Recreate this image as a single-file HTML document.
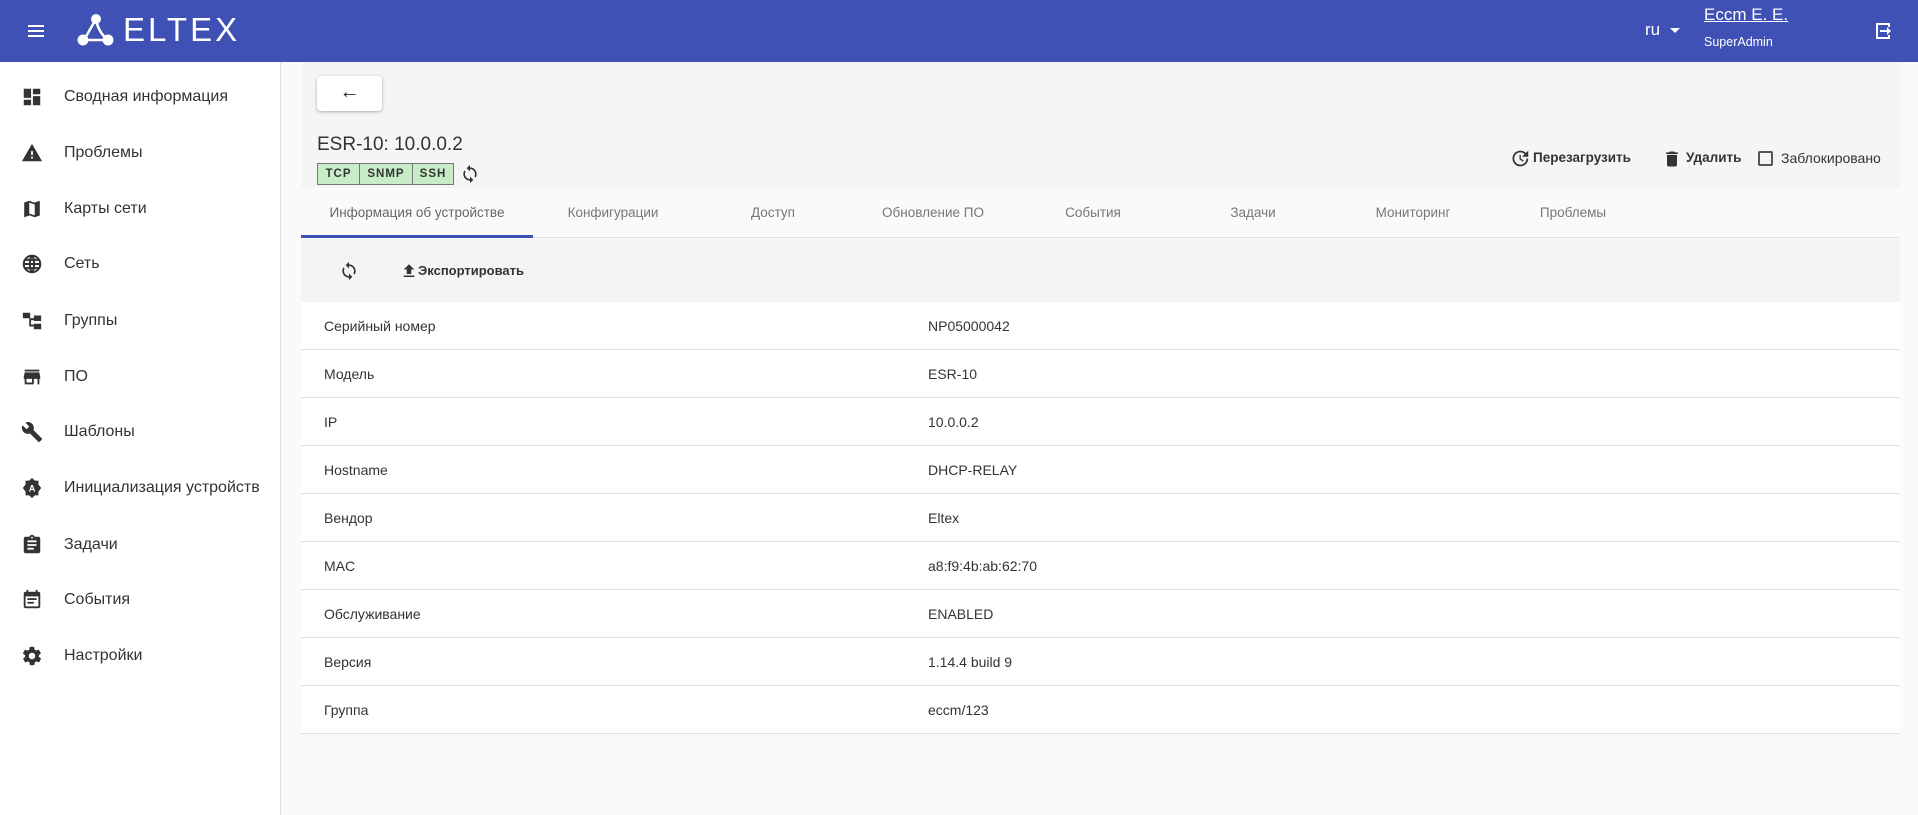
<!DOCTYPE html>
<html><head><meta charset="utf-8"><style>
*{box-sizing:border-box;margin:0;padding:0}
body{width:1918px;height:815px;overflow:hidden;background:#fafafa;font-family:"Liberation Sans",sans-serif;color:#333;position:relative}
.hdr{position:absolute;left:0;top:0;width:1918px;height:62px;background:#3f51b5;color:#fff}
.side{position:absolute;left:0;top:62px;width:281px;height:753px;background:#fff;border-right:1px solid #e0e0e0}
.it{position:absolute;left:0;height:40px;width:280px}
.it svg{position:absolute;left:21px;top:8px}
.it span{position:absolute;left:64px;top:10px;font-size:16px;color:#333}
.abs{position:absolute}
.tab{position:absolute;top:188px;height:50px;line-height:50px;text-align:center;font-size:13.5px;color:#777}
.row{position:absolute;left:301px;width:1599px;height:48px;background:#fff;border-bottom:1px solid #e0e0e0;font-size:14px}
.row .l{position:absolute;left:23px;top:16px}
.row .v{position:absolute;left:627px;top:16px}
</style></head><body>
<div class="hdr">
 <svg class="abs" style="left:26px;top:21px" width="20" height="20" viewBox="0 0 20 20"><rect x="2" y="4" width="16" height="2" fill="#fff"/><rect x="2" y="9" width="16" height="2" fill="#fff"/><rect x="2" y="14" width="16" height="2" fill="#fff"/></svg>
 <svg class="abs" style="left:76px;top:12px" width="40" height="36" viewBox="0 0 40 36"><path d="M20 7 Q22 20 32 28 M8 28 L32 28 M20 7 L8 28" stroke="#fff" stroke-width="2.5" fill="none"/><circle cx="20" cy="7" r="5" fill="#fff"/><circle cx="7" cy="28" r="5.5" fill="#fff"/><circle cx="32" cy="28" r="5.5" fill="#fff"/></svg>
 <div class="abs" style="left:123px;top:12px;font-size:33px;letter-spacing:3px;line-height:36px">ELTEX</div>
 <div class="abs" style="left:1645px;top:20px;font-size:17px">ru</div>
 <div class="abs" style="left:1670px;top:28px;border-left:5px solid transparent;border-right:5px solid transparent;border-top:5px solid #fff"></div>
 <div class="abs" style="left:1704px;top:5px;font-size:17px;text-decoration:underline">Eccm E. E.</div>
 <div class="abs" style="left:1704px;top:35px;font-size:12.5px">SuperAdmin</div>
 <svg class="abs" style="left:1874px;top:21px" width="20" height="20" viewBox="0 0 20 20"><path d="M2 2h14v4h-2V4H4v12h10v-2h2v4H2z" fill="#fff"/><path d="M6 9h7V6l4 4-4 4v-3H6z" fill="#fff"/></svg>
</div>
<div class="side">
 <div class="it" style="top:16px"><svg width="22" height="22" viewBox="0 0 24 24" fill="#333"><path d="M3 13h8V3H3zm0 8h8v-6H3zm10 0h8V11h-8zm0-18v6h8V3z"/></svg><span>Сводная информация</span></div>
 <div class="it" style="top:72px"><svg width="22" height="22" viewBox="0 0 24 24" fill="#333"><path d="M1 21h22L12 2zm12-3h-2v-2h2zm0-4h-2v-4h2z"/></svg><span>Проблемы</span></div>
 <div class="it" style="top:128px"><svg width="22" height="22" viewBox="0 0 24 24" fill="#333"><path d="M20.5 3l-6 2.1L9 3 3.5 4.9V21l6-2.1L15 21l5.5-1.9zM15 19l-6-2.1V5l6 2.1z"/></svg><span>Карты сети</span></div>
 <div class="it" style="top:183px"><svg width="22" height="22" viewBox="0 0 24 24" fill="none" stroke="#333" stroke-width="2.2"><circle cx="12" cy="12" r="9"/><path d="M3 12h18M12 3c3 3 3 15 0 18M12 3c-3 3-3 15 0 18M4.5 7.5h15M4.5 16.5h15"/></svg><span>Сеть</span></div>
 <div class="it" style="top:240px"><svg width="22" height="22" viewBox="0 0 24 24" fill="#333"><path d="M2 3h8v6H2zM14 6h8v6h-8zM14 15h8v6h-8zM7 9h2v9h5v-2h-3V11h3V9H7z"/></svg><span>Группы</span></div>
 <div class="it" style="top:296px"><svg width="22" height="22" viewBox="0 0 24 24" fill="#333"><path d="M4 4h16v2H4zm16 3H4l-1 5v2h1v6h10v-6h4v6h2v-6h1v-2zm-8 11H6v-4h6z"/></svg><span>ПО</span></div>
 <div class="it" style="top:351px"><svg width="22" height="22" viewBox="0 0 24 24" fill="#333"><path d="M22.7 19l-9.1-9.1c.9-2.3.4-5-1.5-6.9-2-2-5-2.4-7.4-1.3L9 6 6 9 1.6 4.7C.4 7.1.9 10.1 2.9 12.1c1.9 1.9 4.6 2.4 6.9 1.5l9.1 9.1c.4.4 1 .4 1.4 0l2.3-2.3c.5-.4.5-1.1.1-1.4z"/></svg><span>Шаблоны</span></div>
 <div class="it" style="top:407px"><svg width="22" height="22" viewBox="0 0 24 24"><path fill="#333" d="M12 1l3 3h4v4l3 4-3 4v4h-4l-3 3-3-3H5v-4l-3-4 3-4V4h4z"/><text x="12" y="16" font-size="10" font-weight="bold" fill="#fff" text-anchor="middle" font-family="Liberation Sans">A</text></svg><span>Инициализация устройств</span></div>
 <div class="it" style="top:464px"><svg width="22" height="22" viewBox="0 0 24 24" fill="#333"><path d="M19 3h-4.2C14.4 1.8 13.3 1 12 1s-2.4.8-2.8 2H5c-1.1 0-2 .9-2 2v14c0 1.1.9 2 2 2h14c1.1 0 2-.9 2-2V5c0-1.1-.9-2-2-2zm-7 0c.6 0 1 .4 1 1s-.4 1-1 1-1-.4-1-1 .4-1 1-1zm2 14H7v-2h7zm3-4H7v-2h10zm0-4H7V7h10z"/></svg><span>Задачи</span></div>
 <div class="it" style="top:519px"><svg width="22" height="22" viewBox="0 0 24 24" fill="#333"><path d="M16 1v2H8V1H6v2H5c-1.1 0-2 .9-2 2v14c0 1.1.9 2 2 2h14c1.1 0 2-.9 2-2V5c0-1.1-.9-2-2-2h-1V1zm3 18H5V8h14z"/><rect x="7" y="10" width="10" height="2" fill="#333"/><rect x="7" y="14" width="7" height="2" fill="#333"/></svg><span>События</span></div>
 <div class="it" style="top:575px"><svg width="22" height="22" viewBox="0 0 24 24" fill="#333"><path d="M19.4 13c0-.3.1-.6.1-1s0-.7-.1-1l2.1-1.6c.2-.2.2-.4.1-.6l-2-3.5c-.1-.2-.4-.3-.6-.2l-2.5 1c-.5-.4-1.1-.7-1.7-1l-.4-2.6c0-.2-.2-.4-.5-.4h-4c-.2 0-.4.2-.5.4l-.4 2.7c-.6.2-1.1.6-1.700 1l-2.5-1c-.2-.1-.5 0-.6.2l-2 3.5c-.1.2-.1.5.1.6L4.6 11c0 .3-.1.6-.1 1s0 .7.1 1l-2.1 1.6c-.2.2-.2.4-.1.6l2 3.5c.1.2.4.3.6.2l2.5-1c.5.4 1.1.7 1.7 1l.4 2.6c0 .2.2.4.5.4h4c.2 0 .4-.2.5-.4l.4-2.6c.6-.3 1.2-.6 1.7-1l2.5 1c.2.1.5 0 .6-.2l2-3.5c.1-.2.1-.5-.1-.6zM12 15.5c-1.9 0-3.5-1.6-3.5-3.5s1.6-3.5 3.5-3.5 3.5 1.6 3.5 3.5-1.6 3.5-3.5 3.5z"/></svg><span>Настройки</span></div>
</div>
<div class="abs" style="left:301px;top:62px;width:1599px;height:126px;background:#f5f5f5"></div>
<div class="abs" style="left:317px;top:76px;width:65px;height:35px;background:#fff;border-radius:4px;box-shadow:0 1px 3px rgba(0,0,0,.3);text-align:center;line-height:33px;font-size:20px;color:#222">←</div>
<div class="abs" style="left:317px;top:134px;font-size:19px;color:#333">ESR-10: 10.0.0.2</div>
<div class="abs" style="left:317px;top:163px;height:22px;display:flex;border:1px solid #777;background:#c8ecc8;font-size:11.5px;font-weight:bold;letter-spacing:1px;color:#333;line-height:20px">
 <div style="width:42px;text-align:center;border-right:1px solid #777">TCP</div><div style="width:53px;text-align:center;border-right:1px solid #777">SNMP</div><div style="width:40px;text-align:center">SSH</div></div>
<svg class="abs" style="left:460px;top:164px" width="20" height="20" viewBox="0 0 24 24" fill="#333"><path d="M12 4V1L8 5l4 4V6c3.3 0 6 2.7 6 6 0 1-.3 2-.7 2.8l1.5 1.5C19.5 15 20 13.6 20 12c0-4.4-3.6-8-8-8zm0 14c-3.3 0-6-2.7-6-6 0-1 .3-2 .7-2.8L5.2 7.7C4.5 9 4 10.4 4 12c0 4.4 3.6 8 8 8v3l4-4-4-4z"/></svg>
<svg class="abs" style="left:1509px;top:148px" width="21" height="21" viewBox="0 0 24 24" fill="#333"><path d="M13 3a9 9 0 1 0 9 9h-2a7 7 0 1 1-2.1-5l-2.9 3h7V3l-2.6 2.6A9 9 0 0 0 13 3zm-1 5v5l4 2.5.8-1.3-3.3-2V8z"/></svg>
<div class="abs" style="left:1533px;top:150px;font-size:13.5px;font-weight:bold;color:#333">Перезагрузить</div>
<svg class="abs" style="left:1662px;top:148px" width="20" height="22" viewBox="0 0 24 24" fill="#333"><path d="M6 19c0 1.1.9 2 2 2h8c1.1 0 2-.9 2-2V7H6zM19 4h-3.5l-1-1h-5l-1 1H5v2h14z"/></svg>
<div class="abs" style="left:1686px;top:150px;font-size:13.5px;font-weight:bold;color:#333">Удалить</div>
<div class="abs" style="left:1758px;top:151px;width:15px;height:15px;border:2px solid #555;border-radius:2px"></div>
<div class="abs" style="left:1781px;top:150px;font-size:14px;color:#333">Заблокировано</div>
<div class="abs" style="left:301px;top:188px;width:1599px;height:50px;background:#fafafa;border-bottom:1px solid #e0e0e0"></div>
<div class="tab" style="left:301px;width:232px;color:#666">Информация об устройстве</div>
<div class="abs" style="left:301px;top:235px;width:232px;height:3px;background:#3f51b5"></div>
<div class="tab" style="left:533px;width:160px">Конфигурации</div>
<div class="tab" style="left:693px;width:160px">Доступ</div>
<div class="tab" style="left:853px;width:160px">Обновление ПО</div>
<div class="tab" style="left:1013px;width:160px">События</div>
<div class="tab" style="left:1173px;width:160px">Задачи</div>
<div class="tab" style="left:1333px;width:160px">Мониторинг</div>
<div class="tab" style="left:1493px;width:160px">Проблемы</div>
<div class="abs" style="left:301px;top:239px;width:1599px;height:63px;background:#f4f4f4"></div>
<svg class="abs" style="left:339px;top:261px" width="20" height="20" viewBox="0 0 24 24" fill="#333"><path d="M12 4V1L8 5l4 4V6c3.3 0 6 2.7 6 6 0 1-.3 2-.7 2.8l1.5 1.5C19.5 15 20 13.6 20 12c0-4.4-3.6-8-8-8zm0 14c-3.3 0-6-2.7-6-6 0-1 .3-2 .7-2.8L5.2 7.7C4.5 9 4 10.4 4 12c0 4.4 3.6 8 8 8v3l4-4-4-4z"/></svg>
<svg class="abs" style="left:400px;top:262px" width="18" height="18" viewBox="0 0 24 24" fill="#333"><path d="M9 16h6v-6h4l-7-7-7 7h4zm-4 2h14v2H5z"/></svg>
<div class="abs" style="left:418px;top:263px;font-size:13px;font-weight:bold;color:#333">Экспортировать</div>
<div class="row" style="top:302px"><span class="l">Серийный номер</span><span class="v">NP05000042</span></div>
<div class="row" style="top:350px"><span class="l">Модель</span><span class="v">ESR-10</span></div>
<div class="row" style="top:398px"><span class="l">IP</span><span class="v">10.0.0.2</span></div>
<div class="row" style="top:446px"><span class="l">Hostname</span><span class="v">DHCP-RELAY</span></div>
<div class="row" style="top:494px"><span class="l">Вендор</span><span class="v">Eltex</span></div>
<div class="row" style="top:542px"><span class="l">MAC</span><span class="v">a8:f9:4b:ab:62:70</span></div>
<div class="row" style="top:590px"><span class="l">Обслуживание</span><span class="v">ENABLED</span></div>
<div class="row" style="top:638px"><span class="l">Версия</span><span class="v">1.14.4 build 9</span></div>
<div class="row" style="top:686px"><span class="l">Группа</span><span class="v">eccm/123</span></div>
</body></html>
